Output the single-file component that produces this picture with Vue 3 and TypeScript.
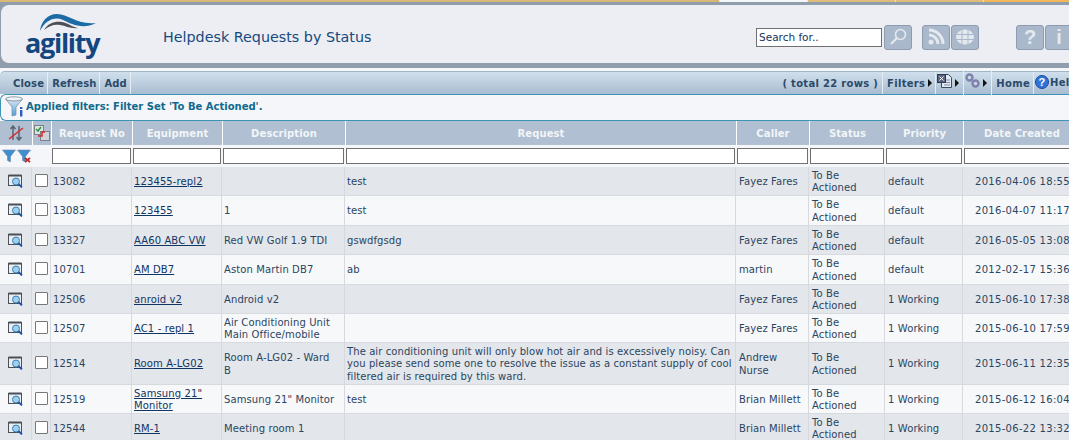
<script setup lang="ts">
interface Row {
  no: string
  eq: string
  desc: string
  req: string
  caller: string
  priority: string
  date: string
}
const rows: Row[] = [
  { no: '13082', eq: '123455-repl2', desc: '', req: 'test', caller: 'Fayez Fares', priority: 'default', date: '2016-04-06 18:55' },
  { no: '13083', eq: '123455', desc: '1', req: 'test', caller: '', priority: 'default', date: '2016-04-07 11:17' },
  { no: '13327', eq: 'AA60 ABC VW', desc: 'Red VW Golf 1.9 TDI', req: 'gswdfgsdg', caller: 'Fayez Fares', priority: 'default', date: '2016-05-05 13:08' },
  { no: '10701', eq: 'AM DB7', desc: 'Aston Martin DB7', req: 'ab', caller: 'martin', priority: 'default', date: '2012-02-17 15:36' },
  { no: '12506', eq: 'anroid v2', desc: 'Android v2', req: '', caller: 'Fayez Fares', priority: '1 Working', date: '2015-06-10 17:38' },
  { no: '12507', eq: 'AC1 - repl 1', desc: 'Air Conditioning Unit Main Office/mobile', req: '', caller: 'Fayez Fares', priority: '1 Working', date: '2015-06-10 17:59' },
  { no: '12514', eq: 'Room A-LG02', desc: 'Room A-LG02 - Ward B', req: 'The air conditioning unit will only blow hot air and is excessively noisy. Can you please send some one to resolve the issue as a constant supply of cool filtered air is required by this ward.', caller: 'Andrew Nurse', priority: '1 Working', date: '2015-06-11 12:35' },
  { no: '12519', eq: 'Samsung 21" Monitor', desc: 'Samsung 21" Monitor', req: 'test', caller: 'Brian Millett', priority: '1 Working', date: '2015-06-12 16:04' },
  { no: '12544', eq: 'RM-1', desc: 'Meeting room 1', req: '', caller: 'Brian Millett', priority: '1 Working', date: '2015-06-22 13:32' },
]
const headers = ['Request No', 'Equipment', 'Description', 'Request', 'Caller', 'Status', 'Priority', 'Date Created']
</script>

<template>
  <div class="page">
    <div class="tabstrip">
      <span class="tab t1"></span>
      <span class="tab t2"></span>
      <span class="tab t3"></span>
      <span class="tab t3"></span>
      <span class="tab t4"></span>
    </div>
    <header class="banner">
      <div class="banner-in">
        <div class="logo">
          <svg class="swoosh" width="58" height="19" viewBox="0 0 58 19">
            <path d="M0 18C1 8 8 1 17 1c12 0 19 11 39 9-13 7-25 1-33-3C14 3 5 8 0 18z" fill="#1c6ba6" />
            <path d="M4 17C8 10 15 8 22 9c6 1 10 5 16 6-7 1-12-2-18-3-6-1-11 1-16 5z" fill="#4c4f55" />
          </svg>
          <span class="logo-text">agility</span>
        </div>
        <h1 class="title">Helpdesk Requests by Status</h1>
        <div class="tools">
          <input class="search" value="Search for.." />
          <span class="tbtn first">
            <svg width="20" height="20" viewBox="0 0 20 20"><circle cx="12.500" cy="7.500" r="5" fill="none" stroke="#e4e9ef" stroke-width="1.600" /><path d="M9 11l-6 6" stroke="#e4e9ef" stroke-width="2.200" /></svg>
          </span>
          <span class="tbtn gap">
            <svg width="20" height="20" viewBox="0 0 20 20"><circle cx="5" cy="15" r="2.500" fill="#e4e9ef" /><path d="M3 8a9 9 0 0 1 9 9M3 3a14 14 0 0 1 14 14" fill="none" stroke="#e4e9ef" stroke-width="3" /></svg>
          </span>
          <span class="tbtn near">
            <svg width="20" height="20" viewBox="0 0 20 20"><ellipse cx="10" cy="10" rx="9" ry="7.500" fill="#e4e9ef" /><path d="M1 7.500h18M1 12.500h18M7 3v14M13 3v14" stroke="#a9b9cb" stroke-width="1" /></svg>
          </span>
          <span class="tbtn wide-gap"><b class="glyph">?</b></span>
          <span class="tbtn near"><b class="glyph">i</b></span>
        </div>
      </div>
    </header>

    <nav class="toolbar">
      <span class="tb-item">Close</span>
      <span class="tb-item">Refresh</span>
      <span class="tb-item">Add</span>
      <span class="tb-spacer">( total 22 rows )</span>
      <span class="tb-item">Filters<i class="caret"></i></span>
      <span class="tb-item icon">
        <svg width="15" height="16" viewBox="0 0 15 16"><path d="M4.500 1.500h7l3 3v10h-10z" fill="#e4eaf2" stroke="#3c4a68" /><path d="M7 7h6M7 9.500h6M7 12h6" stroke="#7f8ba3" /><rect x="0.500" y="1.500" width="8" height="8" fill="#5b6780" stroke="#2f3a52" /><path d="M2.500 3.500l4 4M6.500 3.500l-4 4" stroke="#fff" /></svg><i class="caret"></i>
      </span>
      <span class="tb-item icon">
        <svg width="15" height="16" viewBox="0 0 15 16"><circle cx="4.500" cy="4.500" r="3" fill="none" stroke="#7f82ad" stroke-width="2.400" /><circle cx="10.500" cy="10.500" r="3" fill="#cfd3e4" stroke="#7f82ad" stroke-width="2.400" /></svg><i class="caret"></i>
      </span>
      <span class="tb-item">Home</span>
      <span class="help">
        <svg width="14" height="14" viewBox="0 0 14 14"><circle cx="7" cy="7" r="6.500" fill="#2e74d8" stroke="#1b4aa0" /><text x="7" y="11" text-anchor="middle" font-size="11" font-weight="700" font-family="Liberation Sans, sans-serif" fill="#fff">?</text></svg>
        <em>Help</em>
      </span>
    </nav>

    <div class="applied">
      <svg width="20" height="21" viewBox="0 0 20 21">
        <defs>
          <linearGradient id="fg" x1="0" y1="0" x2="0" y2="1"><stop offset="0" stop-color="#d7e6f2" /><stop offset="1" stop-color="#4e9fdb" /></linearGradient>
        </defs>
        <ellipse cx="9" cy="3" rx="8.500" ry="2.200" fill="#eef3f7" stroke="#7d8b99" stroke-width="0.800" />
        <path d="M1 3.500c3 2 13 2 16 0L11 11v8l-4 1v-9z" fill="url(#fg)" stroke="#7d8b99" stroke-width="0.700" />
        <rect x="15" y="14" width="2.400" height="6.500" fill="#2a5fc0" />
        <rect x="15" y="11" width="2.400" height="2" fill="#2a5fc0" />
      </svg>
      <span>Applied filters: Filter Set 'To Be Actioned'.</span>
    </div>

    <table class="grid">
      <colgroup>
        <col class="c1" /><col class="c2" /><col class="c3" /><col class="c4" /><col class="c5" />
        <col class="c6" /><col class="c7" /><col class="c8" /><col class="c9" /><col class="c10" />
      </colgroup>
      <thead>
        <tr class="head">
          <th>
            <svg width="16" height="16" viewBox="0 0 16 16"><path d="M5 1v14M2.500 4L5 1l2.500 3M11 15V1M8.500 12l2.500 3 2.500-3" fill="none" stroke="#5a6470" stroke-width="1.500" /><path d="M1 14L15 3" stroke="#d8272d" stroke-width="1.500" /></svg>
          </th>
          <th>
            <svg width="16" height="16" viewBox="0 0 16 16"><rect x="0.500" y="0.500" width="9" height="9" fill="#dfe3e6" stroke="#7a8088" /><rect x="6.500" y="6.500" width="9" height="9" fill="#d0d4d8" stroke="#7a8088" /><path d="M2 4l2 2 3-4" fill="none" stroke="#2a9a3a" stroke-width="1.500" /><path d="M4 11h4V7h3" fill="none" stroke="#d8272d" stroke-width="1.500" /></svg>
          </th>
          <th v-for="h in headers" :key="h">{{ h }}</th>
        </tr>
        <tr class="filters">
          <td class="funnels">
            <div class="funnel-pair">
              <svg width="14" height="14" viewBox="0 0 14 14"><path d="M0.500 1h13L8.500 7.500V13l-3-1.500V7.500z" fill="#3f8fd0" stroke="#6f8ca6" stroke-width="0.600" /></svg>
              <svg width="14" height="14" viewBox="0 0 14 14"><path d="M0.500 1h13L8.500 7.500V13l-3-1.500V7.500z" fill="#3f8fd0" stroke="#6f8ca6" stroke-width="0.600" /><path d="M8 9l5 4M13 9l-5 4" stroke="#c62828" stroke-width="1.800" /></svg>
            </div>
          </td>
          <td></td>
          <td v-for="h in headers" :key="h"><input class="finput" /></td>
        </tr>
      </thead>
      <tbody>
        <tr v-for="r in rows" :key="r.no" class="row">
          <td class="center">
            <svg class="view" width="16" height="14" viewBox="0 0 16 14"><rect x="0.500" y="1.500" width="13" height="10" fill="#e8eef3" stroke="#4a4f58" /><rect x="0.500" y="0.500" width="13" height="2" fill="#4a4f58" /><circle cx="8" cy="7.500" r="3.500" fill="#9cd0ee" stroke="#3d7fb5" /><path d="M10.500 10l3.500 3.500" stroke="#1f55a8" stroke-width="1.800" /></svg>
          </td>
          <td class="center"><span class="check"></span></td>
          <td>{{ r.no }}</td>
          <td><a class="link">{{ r.eq }}</a></td>
          <td>{{ r.desc }}</td>
          <td>{{ r.req }}</td>
          <td>{{ r.caller }}</td>
          <td>To Be Actioned</td>
          <td>{{ r.priority }}</td>
          <td class="date">{{ r.date }}</td>
        </tr>
      </tbody>
    </table>
  </div>
</template>

<style>
html, body { margin: 0; padding: 0; background: #fff; overflow: hidden; }
</style>

<style scoped>
.page {
  width: 1069px;
  height: 440px;
  overflow: hidden;
  font-family: "DejaVu Sans", Verdana, sans-serif;
  font-size: 10px;
  color: #2b4560;
  background: #f4f6f9;
}
.tabstrip { height: 2px; display: flex; background: #e5b765; }
.tab { display: block; height: 2px; flex: none; border-right: 1px solid #f3e3c4; box-sizing: border-box; }
.t1 { width: 720px; background: #d9b877; }
.t2 { width: 88px; background: #f4f6f9; }
.t3 { width: 88px; background: #e0bd7c; }
.t4 { width: 85px; background: #f0b858; border: 0; }
.banner { background: #8f9dad; padding: 3px 0 5px 1px; }
.banner-in {
  height: 58px;
  background: #eceef3;
  border-radius: 8px 0 0 8px;
  display: flex;
  align-items: center;
  box-sizing: border-box;
  padding-top: 6px;
}
.logo {
  width: 162px;
  height: 52px;
  position: relative;
  flex: none;
  margin-top: -6px;
}
.swoosh { position: absolute; left: 39px; top: 5px; }
.logo-text {
  position: absolute;
  left: 24px;
  top: 17px;
  font: bold 27px/36px "Open Sans", "Liberation Sans", sans-serif;
  letter-spacing: -1.300px;
  color: #14467f;
}
.title {
  margin: 0;
  font-size: 14.300px;
  font-weight: 400;
  color: #16497f;
  flex: none;
}
.tools {
  margin-left: auto;
  display: flex;
  align-items: center;
  margin-right: -4px;
}
.search {
  box-sizing: border-box;
  width: 126px;
  height: 19px;
  border: 1px solid #6f6f6f;
  background: #fff;
  font: 10.500px "DejaVu Sans", sans-serif;
  color: #16345c;
  padding: 0 2px;
}
.tbtn {
  box-sizing: border-box;
  width: 28px;
  height: 25px;
  background: #a9b9cb;
  border: 1px solid #8e9caf;
  border-radius: 3px;
  display: flex;
  align-items: center;
  justify-content: center;
  flex: none;
}
.first { margin-left: 2px; }
.gap { margin-left: 10px; }
.near { margin-left: 1px; }
.wide-gap { margin-left: 37px; }
.glyph { color: #e4e9ef; font: bold 20px "Liberation Sans", sans-serif; }
.toolbar {
  margin-top: 3px;
  height: 22px;
  width: 1095px;
  display: flex;
  align-items: center;
  font-weight: 700;
  font-size: 10px;
  letter-spacing: 0.300px;
  color: #2b4a6a;
  background: linear-gradient(#d0dfec, #a9bdd1);
  border-top: 1px solid #a3b4c5;
  border-radius: 5px 0 0 0;
}
.tb-item {
  height: 100%;
  display: flex;
  align-items: center;
  padding: 0 3px 0 4px;
  border-right: 1px solid #e6eef5;
}
.tb-item:first-child { padding-left: 13px; padding-right: 3px; letter-spacing: 0.150px; }
.tb-item:nth-child(2), .tb-item:nth-child(3) { letter-spacing: 0.100px; }
.tb-spacer {
  margin-left: auto;
  padding-right: 4px;
  border-right: 1px solid #e6eef5;
  height: 100%;
  display: flex;
  align-items: center;
}
.icon { padding: 0 4px 5px 1px; }
.caret {
  display: inline-block;
  width: 0;
  height: 0;
  margin: 0 0 -5px 3px;
  border-left: 4px solid #111;
  border-top: 4px solid transparent;
  border-bottom: 4px solid transparent;
}
.tb-item:not(.icon) .caret { margin-bottom: 0; }
.help { display: flex; align-items: center; gap: 1px; padding: 0 0 2px 1px; width: 60px; flex: none; }
.help em { font-style: normal; }
.applied {
  box-sizing: border-box;
  height: 27px;
  display: flex;
  align-items: center;
  gap: 1px;
  padding: 0 0 2px 4px;
  background: #f4f6f9;
  border: 1px solid #3f93b4;
  border-right: 0;
  border-radius: 6px 0 0 6px;
  color: #0f6a8e;
  font-weight: 700;
}
.grid {
  border-collapse: separate;
  border-spacing: 0;
  table-layout: fixed;
  width: 1080px;
}
.c1 { width: 32px; }
.c2 { width: 19px; }
.c3 { width: 81px; }
.c4 { width: 90px; }
.c5 { width: 123px; }
.c6 { width: 391px; }
.c7 { width: 73px; }
.c8 { width: 76px; }
.c9 { width: 78px; }
.c10 { width: 117px; }
.head th {
  box-sizing: border-box;
  height: 24px;
  padding: 0;
  background: #b0c0d2;
  color: #f2f5f8;
  font-weight: 700;
  font-size: 10px;
  letter-spacing: 0.100px;
  text-align: center;
  border-left: 1px solid #fff;
}
.head th:first-child { border-left: 0; }
.head th svg { vertical-align: middle; }
.filters td {
  box-sizing: border-box;
  height: 22px;
  padding: 0 1px 0 1px;
  background: #f4f6f9;
}
.funnel-pair { display: flex; gap: 1px; margin-left: 1px; }
.finput {
  box-sizing: border-box;
  display: block;
  width: 100%;
  height: 16px;
  border: 1px solid #707070;
  background: #fff;
  margin: 0;
}
.row td {
  box-sizing: border-box;
  padding: 2px 2px 0;
  height: 29px;
  line-height: 12.400px;
  letter-spacing: 0.110px;
  color: #2b4560;
  border-right: 1px solid #d6d9dd;
  border-bottom: 1px solid #d6d9dd;
  vertical-align: middle;
  background: #f7f8fa;
}
.row:nth-child(2) td, .row:nth-child(4) td { height: 30px; }
.row:nth-child(7) td { height: 42px; }
.row:nth-child(odd) td { background: #e3e6eb; }
.row td:nth-child(5) { padding-right: 8px; }
.row td:nth-child(6) { padding-right: 0; letter-spacing: 0.090px; }
.row td:nth-child(7), .row td:nth-child(8), .row td:nth-child(9) { padding-left: 3px; }
.row td.center { text-align: center; padding: 0; }
.row td.date { padding-left: 12px; white-space: nowrap; letter-spacing: 0.300px; }
.view { display: block; margin: -1px 0 0 8px; }
.link { color: #0f3564; text-decoration: underline; }
.check {
  display: block;
  box-sizing: border-box;
  width: 13px;
  height: 13px;
  margin: -2px 0 0 3px;
  background: #fff;
  border: 1px solid #777;
  border-radius: 1px;
}
</style>
